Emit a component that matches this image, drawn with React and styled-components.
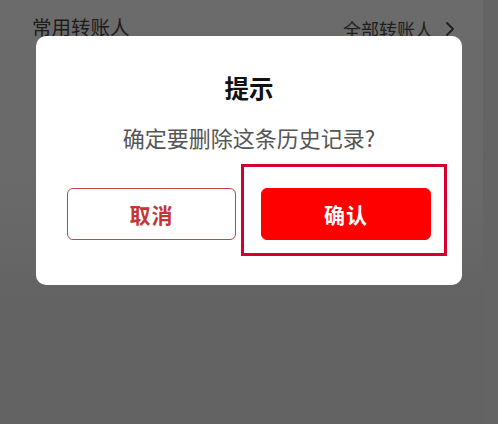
import React from "react";
import styled, { createGlobalStyle } from "styled-components";

const Global = createGlobalStyle`
  html, body { margin: 0; padding: 0; }
  body {
    width: 498px;
    height: 424px;
    overflow: hidden;
    background: #646464;
    font-family: "Noto Sans CJK SC", "Noto Sans", sans-serif;
  }
`;

const Page = styled.div`
  position: relative;
  width: 498px;
  height: 424px;
  background: #646464;
`;

const Card = styled.div`
  margin: 0 15px 0 0;
  height: 424px;
  background: linear-gradient(#6b6b6b 0px, #696969 200px, #636363 300px);
  padding: 11px 28px 0 32px;
  box-sizing: border-box;
`;

const HeaderRow = styled.div`
  display: flex;
  align-items: center;
  justify-content: space-between;
`;

const SectionTitle = styled.span`
  font-size: 19.5px;
  line-height: 28px;
  color: #1c1c1c;
`;

const MoreLink = styled.span`
  display: flex;
  align-items: center;
  gap: 12px;
  font-size: 18px;
  line-height: 28px;
  color: #1e1e1e;
  margin-top: 4px;
`;

const Overlay = styled.div`
  position: absolute;
  inset: 0;
  display: flex;
  justify-content: center;
  align-items: flex-start;
  padding-top: 36px;
`;

const Dialog = styled.div`
  width: 426px;
  box-sizing: border-box;
  background: #ffffff;
  border-radius: 10px;
  padding: 36px 31px 45px;
  display: flex;
  flex-direction: column;
  align-items: center;
`;

const Title = styled.div`
  font-size: 24.5px;
  font-weight: 700;
  line-height: 32px;
  color: #111111;
`;

const Message = styled.div`
  margin-top: 17px;
  font-size: 22px;
  line-height: 32px;
  color: #555555;
`;

const Actions = styled.div`
  position: relative;
  margin-top: 35px;
  width: 100%;
  display: grid;
  grid-template-columns: 169px 170px;
  justify-content: space-between;
`;

const Button = styled.button`
  height: 52px;
  box-sizing: border-box;
  border-radius: 6px;
  font-family: inherit;
  font-size: 21px;
  font-weight: 700;
  letter-spacing: 1px;
  cursor: pointer;
  border: 1.5px solid ${(p) => (p.$primary ? "#fe0000" : "#c24444")};
  background: ${(p) => (p.$primary ? "#fe0000" : "#ffffff")};
  color: ${(p) => (p.$primary ? "#ffffff" : "#c43434")};
`;

const Highlight = styled.div`
  position: absolute;
  left: 174px;
  top: -24px;
  width: 206px;
  height: 92px;
  box-sizing: border-box;
  border: 3px solid #d2002f;
  pointer-events: none;
`;

function Chevron() {
  return (
    <svg width="10" height="16" viewBox="0 0 10 16" fill="none">
      <path d="M2 2l6 6-6 6" stroke="#1e1e1e" strokeWidth="1.8" strokeLinecap="round" strokeLinejoin="round" />
    </svg>
  );
}

export default function App() {
  return (
    <>
      <Global />
      <Page>
        <Card>
          <HeaderRow>
            <SectionTitle>常用转账人</SectionTitle>
            <MoreLink>
              全部转账人
              <Chevron />
            </MoreLink>
          </HeaderRow>
        </Card>
        <Overlay>
          <Dialog>
            <Title>提示</Title>
            <Message>确定要删除这条历史记录?</Message>
            <Actions>
              <Button>取消</Button>
              <Button $primary>确认</Button>
              <Highlight />
            </Actions>
          </Dialog>
        </Overlay>
      </Page>
    </>
  );
}
